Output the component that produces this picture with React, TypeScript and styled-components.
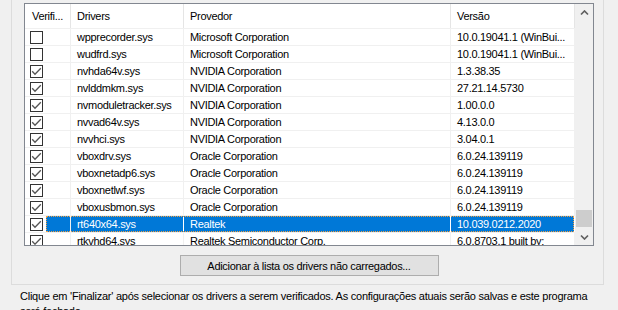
import styled, { createGlobalStyle } from 'styled-components';

type Driver = {
  checked: boolean;
  name: string;
  vendor: string;
  version: string;
};

const drivers: Driver[] = [
  { checked: false, name: 'wpprecorder.sys', vendor: 'Microsoft Corporation', version: '10.0.19041.1 (WinBui...' },
  { checked: false, name: 'wudfrd.sys', vendor: 'Microsoft Corporation', version: '10.0.19041.1 (WinBui...' },
  { checked: true, name: 'nvhda64v.sys', vendor: 'NVIDIA Corporation', version: '1.3.38.35' },
  { checked: true, name: 'nvlddmkm.sys', vendor: 'NVIDIA Corporation', version: '27.21.14.5730' },
  { checked: true, name: 'nvmoduletracker.sys', vendor: 'NVIDIA Corporation', version: '1.00.0.0' },
  { checked: true, name: 'nvvad64v.sys', vendor: 'NVIDIA Corporation', version: '4.13.0.0' },
  { checked: true, name: 'nvvhci.sys', vendor: 'NVIDIA Corporation', version: '3.04.0.1' },
  { checked: true, name: 'vboxdrv.sys', vendor: 'Oracle Corporation', version: '6.0.24.139119' },
  { checked: true, name: 'vboxnetadp6.sys', vendor: 'Oracle Corporation', version: '6.0.24.139119' },
  { checked: true, name: 'vboxnetlwf.sys', vendor: 'Oracle Corporation', version: '6.0.24.139119' },
  { checked: true, name: 'vboxusbmon.sys', vendor: 'Oracle Corporation', version: '6.0.24.139119' },
  { checked: true, name: 'rt640x64.sys', vendor: 'Realtek', version: '10.039.0212.2020' },
  { checked: true, name: 'rtkvhd64.sys', vendor: 'Realtek Semiconductor Corp.', version: '6.0.8703.1 built by:' },
];

const SELECTED = 11;

const CheckMark = () => (
  <svg width="11" height="11" viewBox="0 0 11 11">
    <polyline points="1.2,5.2 4,8.2 9.8,2.2" fill="none" stroke="#555" strokeWidth="1.3" />
  </svg>
);

const Chevron = ({ down }: { down?: boolean }) => (
  <svg width="9" height="6" viewBox="0 0 9 6">
    <polyline
      points={down ? '1,1.5 4.5,5 8,1.5' : '1,4.5 4.5,1 8,4.5'}
      fill="none"
      stroke="#606060"
      strokeWidth="1.7"
    />
  </svg>
);

const App = () => {
  return (
    <Page>
      <GlobalStyle />
      <GroupBox>
        <ListBox>
          <Table>
            <HeaderRow>
              <HeaderCell $width={46} $pad={7}>Verifi...</HeaderCell>
              <HeaderCell $width={113}>Drivers</HeaderCell>
              <HeaderCell $width={267}>Provedor</HeaderCell>
              <HeaderCell $width={124}>Versão</HeaderCell>
            </HeaderRow>
            {drivers.map((d, i) => {
              const selected = i === SELECTED;
              return (
                <Row key={d.name}>
                  <CheckCell>
                    <CheckBox>{d.checked && <CheckMark />}</CheckBox>
                    <SelectFill $selected={selected} />
                  </CheckCell>
                  <Cell $width={113} $selected={selected}>{d.name}</Cell>
                  <Cell $width={267} $selected={selected}>{d.vendor}</Cell>
                  <Cell $width={124} $selected={selected}>{d.version}</Cell>
                  {selected && <FocusRect />}
                </Row>
              );
            })}
          </Table>
          <ScrollBar>
            <ArrowButton><Chevron /></ArrowButton>
            <Track>
              <Thumb />
            </Track>
            <ArrowButton><Chevron down /></ArrowButton>
          </ScrollBar>
        </ListBox>
        <Button type="button">Adicionar à lista os drivers não carregados...</Button>
      </GroupBox>
      <Note>
        Clique em 'Finalizar' após selecionar os drivers a serem verificados. As configurações atuais serão salvas e este programa
        será fechado.
      </Note>
    </Page>
  );
};

export default App;

const GlobalStyle = createGlobalStyle`
  html, body {
    margin: 0;
    padding: 0;
    background: #f0f0f0;
  }
  body {
    font-family: 'Liberation Sans', Arial, sans-serif;
    font-size: 11px;
    letter-spacing: -0.3px;
    color: #000;
    overflow: hidden;
  }
  * {
    box-sizing: border-box;
  }
`;

const Page = styled.div`
  width: 618px;
  height: 310px;
  overflow: hidden;
  display: flex;
  flex-direction: column;
`;

const GroupBox = styled.div`
  margin: 0 14px 0 11px;
  border: 1px solid #dcdcdc;
  border-top: none;
  padding: 3px 9px 8px 12px;
  display: flex;
  flex-direction: column;
`;

const ListBox = styled.div`
  width: 570px;
  height: 243px;
  border: 1px solid #828790;
  background: #fff;
  display: flex;
`;

const Table = styled.div`
  width: 550px;
  display: flex;
  flex-direction: column;
  overflow: hidden;
`;

const HeaderRow = styled.div`
  display: flex;
  flex-shrink: 0;
  height: 25px;
  border-bottom: 1px solid #f0f0f0;
`;

const HeaderCell = styled.div<{ $width: number; $pad?: number }>`
  width: ${(p) => p.$width}px;
  flex-shrink: 0;
  padding: 0 0 0 ${(p) => p.$pad ?? 6}px;
  border-right: 1px solid #e5e5e5;
  display: flex;
  align-items: center;
  white-space: nowrap;
  overflow: hidden;
`;

const Row = styled.div`
  position: relative;
  display: flex;
  flex-shrink: 0;
  height: 17px;
  border-bottom: 1px solid #f0f0f0;
`;

const CheckCell = styled.div`
  width: 46px;
  flex-shrink: 0;
  display: flex;
  align-items: center;
  padding-left: 5px;
  border-right: 1px solid #f0f0f0;
`;

const CheckBox = styled.span`
  width: 13px;
  height: 13px;
  flex-shrink: 0;
  border: 1px solid #333;
  background: #fff;
  display: flex;
  align-items: center;
  justify-content: center;
`;

const SelectFill = styled.span<{ $selected: boolean }>`
  align-self: stretch;
  flex: 1;
  margin-left: 3px;
  background: ${(p) => (p.$selected ? '#0078d7' : 'transparent')};
`;

const Cell = styled.div<{ $width: number; $selected: boolean }>`
  width: ${(p) => p.$width}px;
  flex-shrink: 0;
  padding-left: 6px;
  line-height: 16px;
  white-space: nowrap;
  overflow: hidden;
  border-right: 1px solid ${(p) => (p.$selected ? '#fff' : '#f0f0f0')};
  background: ${(p) => (p.$selected ? '#0078d7' : 'transparent')};
  color: ${(p) => (p.$selected ? '#fff' : '#000')};
`;

const FocusRect = styled.span`
  position: absolute;
  left: 21px;
  right: 1px;
  top: 0;
  bottom: 0;
  border: 1px dotted #f4a040;
  pointer-events: none;
`;

const ScrollBar = styled.div`
  width: 18px;
  background: #f0f0f0;
  display: flex;
  flex-direction: column;
`;

const ArrowButton = styled.div`
  height: 17px;
  display: flex;
  align-items: center;
  justify-content: center;
`;

const Track = styled.div`
  flex: 1;
  display: flex;
  flex-direction: column;
  justify-content: flex-end;
`;

const Thumb = styled.div`
  height: 17px;
  margin: 0 1px 1px;
  background: #cdcdcd;
`;

const Button = styled.button`
  align-self: center;
  width: 259px;
  height: 21px;
  margin-top: 9px;
  border: 1px solid #adadad;
  background: #e1e1e1;
  font: inherit;
  letter-spacing: inherit;
  color: #000;
  padding: 0;
`;

const Note = styled.p`
  margin: 4px 0 0;
  padding: 0 28px 0 20px;
  line-height: 15px;
  letter-spacing: -0.25px;
`;
